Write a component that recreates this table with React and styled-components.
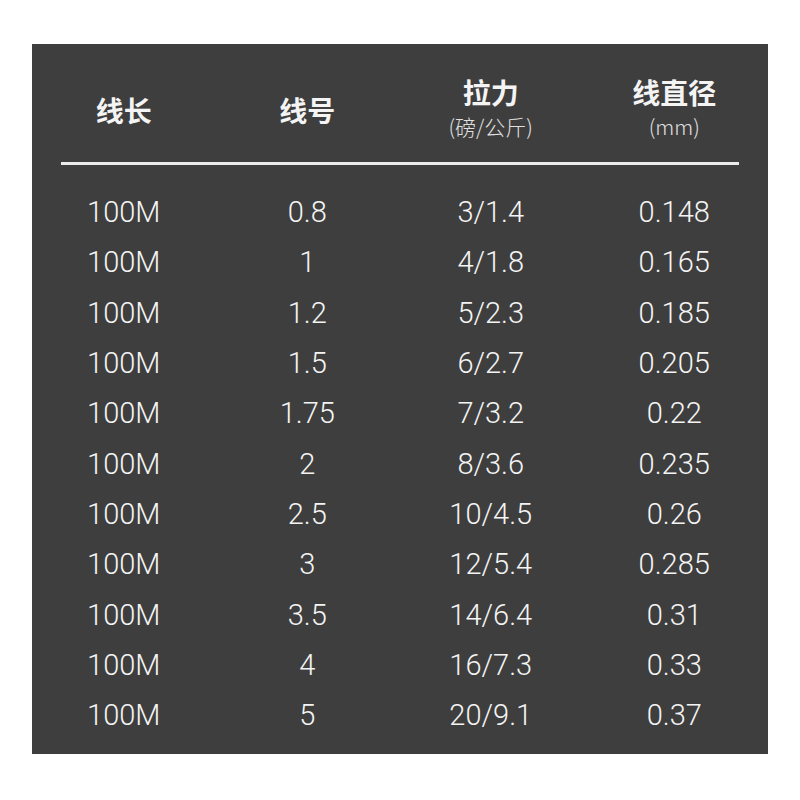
import React from 'react'
import styled, { createGlobalStyle } from 'styled-components'

const rows = [
  ['100M', '0.8', '3/1.4', '0.148'],
  ['100M', '1', '4/1.8', '0.165'],
  ['100M', '1.2', '5/2.3', '0.185'],
  ['100M', '1.5', '6/2.7', '0.205'],
  ['100M', '1.75', '7/3.2', '0.22'],
  ['100M', '2', '8/3.6', '0.235'],
  ['100M', '2.5', '10/4.5', '0.26'],
  ['100M', '3', '12/5.4', '0.285'],
  ['100M', '3.5', '14/6.4', '0.31'],
  ['100M', '4', '16/7.3', '0.33'],
  ['100M', '5', '20/9.1', '0.37'],
]

const headers = [
  { title: '线长' },
  { title: '线号' },
  { title: '拉力', sub: '(磅/公斤)' },
  { title: '线直径', sub: '(mm)' },
]

export default function App() {
  return (
    <>
      <GlobalStyle />
      <Panel>
        <HeaderRow>
          {headers.map(h => (
            <HeadCell key={h.title}>
              <Title>{h.title}</Title>
              {h.sub && <Sub>{h.sub}</Sub>}
            </HeadCell>
          ))}
        </HeaderRow>
        <Divider />
        <Body>
          {rows.map((r, i) => (
            <Row key={i}>
              {r.map((v, j) => <Cell key={j}>{v}</Cell>)}
            </Row>
          ))}
        </Body>
      </Panel>
    </>
  )
}

const GlobalStyle = createGlobalStyle`
  body {
    margin: 0;
    background: #ffffff;
    font-family: Roboto, "Noto Sans CJK SC", sans-serif;
  }
`

const Panel = styled.div`
  width: 736px;
  height: 710px;
  margin-left: 32px;
  margin-top: 44px;
  background: #3e3e3e;
  box-sizing: border-box;
  display: flow-root;
`

const HeaderRow = styled.div`
  display: grid;
  grid-template-columns: repeat(4, 1fr);
  height: 118px;
  padding-top: 14px;
  padding-right: 2px;
  align-items: center;
  box-sizing: border-box;
`

const HeadCell = styled.div`
  display: flex;
  flex-direction: column;
  align-items: center;
  color: #f4f4f4;
`

const Title = styled.div`
  font-family: "Noto Sans CJK SC", sans-serif;
  font-weight: 700;
  font-size: 28px;
  line-height: 32px;
`

const Sub = styled.div`
  font-family: "Noto Sans CJK SC", sans-serif;
  font-weight: 300;
  font-size: 21px;
  line-height: 37px;
  color: #e0e0e0;
`

const Divider = styled.div`
  height: 3px;
  margin: 0 29px;
  background: #ececec;
`

const Body = styled.div`
  padding-top: 22px;
  padding-right: 2px;
`

const Row = styled.div`
  display: grid;
  grid-template-columns: repeat(4, 1fr);
  height: 50.3px;
  align-items: center;
`

const Cell = styled.div`
  text-align: center;
  font-family: Roboto, sans-serif;
  font-weight: 300;
  font-size: 29px;
  color: #f4f4f4;
`
